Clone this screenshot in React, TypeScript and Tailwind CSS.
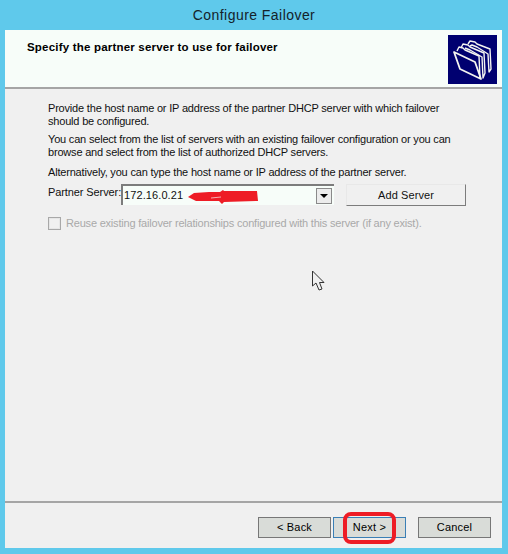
const font = { fontFamily: '"Liberation Sans", Arial, sans-serif' };

function FolderIcon() {
  return (
    <div className="h-[49px] w-[49px] bg-[#000070] bg-[radial-gradient(#000030_0.6px,transparent_0.7px)] bg-[length:2px_2px]">
      <svg width="49" height="49" viewBox="0 0 49 49" fill="none" stroke="#f4f4f0" strokeWidth="1.4" strokeLinejoin="round">
        <path d="M20 9 L22 6 L27 7 L29 9 L42 14 L43 34 L41 37 L40 19 L29 12 L24 10 L22 11" />
        <path d="M13 13 L15 9 L20 10 L22 12 L36 18 L37 38 L35 43 L34 22 L22 15 L17 13" />
        <path d="M9 16 L11 12 L15 13 L17 15 L31 21 L32 43" />
        <path d="M6 17 L27 27 L33 44 L12 34 Z" strokeWidth="1.8" />
      </svg>
    </div>
  );
}

function WizardButton({ label, focused }: { label: string; focused?: boolean }) {
  return (
    <button
      className={`flex h-[21px] w-[73px] items-center justify-center border bg-[#d9dcd8] text-[11px] tracking-[0.2px] text-black ${
        focused ? 'border-[#3b7fb5]' : 'border-[#777777]'
      }`}
    >
      {label}
    </button>
  );
}

function Cursor() {
  return (
    <svg className="absolute left-[311px] top-[270px]" width="15" height="22" viewBox="0 0 15 22">
      <path d="M1.500 1 L1.500 16 L5 13 L8 20 L11 19 L8.500 12.500 L13 12.500 Z" fill="#f0f0f0" stroke="#333333" strokeWidth="1" />
    </svg>
  );
}

function RedArrow() {
  return (
    <svg className="absolute left-[187px] top-[189px]" width="72" height="16" viewBox="0 0 72 16">
      <path d="M1 8 L7 4 L22 3 L33 3 L36 1 L37 2 L70 2 L71 12 L37 13 L35 15 L32 12 L9 12 Z" fill="#ee1c25" />
      <path d="M24 9 L34 8" stroke="#f6b0b0" strokeWidth="1" />
    </svg>
  );
}

export default function App() {
  return (
    <div style={font} className="relative flex h-[554px] w-[508px] flex-col overflow-hidden bg-[#5fc9eb] text-black">
      <div className="flex h-[30px] items-center justify-center text-[14px] tracking-[0.45px] text-[#14222a]">
        Configure Failover
      </div>
      <div className="ml-[5px] flex h-[518px] w-[497px] flex-col bg-[#f0f0f0]">
        <div className="flex h-[59px] justify-between border-b-2 border-[#a5a5a5] bg-[#f7fdf9] pr-[5px] pt-[5px]">
          <div className="pl-[22px] pt-[6px] text-[11.5px] font-bold leading-[13px] tracking-[0.2px]">
            Specify the partner server to use for failover
          </div>
          <FolderIcon />
        </div>
        <div className="flex-1 px-[43px] pt-[13px] text-[11px] leading-[13px] tracking-[-0.19px] text-[#111111]">
          <p>
            Provide the host name or IP address of the partner DHCP server with which failover should be configured.
          </p>
          <p className="mt-[5px]">
            You can select from the list of servers with an existing failover configuration or you can browse and select from the list of authorized DHCP servers.
          </p>
          <p className="mt-[7px]">Alternatively, you can type the host name or IP address of the partner server.</p>
          <div className="mt-[5px] flex items-start">
            <span className="mt-[2px] w-[73px] shrink-0 whitespace-nowrap tracking-[-0.1px]">Partner Server:</span>
            <div className="flex h-[21px] w-[213px] shrink-0 items-center justify-between border-t-2 border-l-2 border-[#7c7c7c] bg-[#f7fdf9] pl-[1px] pr-[2px] tracking-[0.1px]">
              <span>172.16.0.21</span>
              <span className="flex h-[16px] w-[16px] items-center justify-center border border-[#8a8a8a] bg-[#ececec]">
                <svg width="8" height="4" viewBox="0 0 8 4"><path d="M0 0 H8 L4 4 Z" fill="#000" /></svg>
              </span>
            </div>
            <button className="ml-[12px] flex h-[22px] w-[120px] shrink-0 items-center justify-center border border-[#e8e8e8] border-r-[#7c7c7c] border-b-[#7c7c7c] bg-[#f0f0f0] text-[11px] tracking-[0.1px]">
              Add Server
            </button>
          </div>
          <div className="mt-[11px] flex items-center whitespace-nowrap tracking-[-0.2px] text-[#a9a9a9]">
            <span className="h-[13px] w-[13px] border border-[#a8a8a8] shadow-[inset_0_0_0_1px_#e6e6e6]" />
            <span className="ml-[5px]">Reuse existing failover relationships configured with this server (if any exist).</span>
          </div>
        </div>
        <div className="flex h-[47px] items-start justify-end border-t-2 border-[#a5a5a5] pr-[11px] pt-[14px]">
          <WizardButton label="< Back" />
          <div className="ml-[2px]">
            <WizardButton label="Next >" focused />
          </div>
          <div className="ml-[12px]">
            <WizardButton label="Cancel" />
          </div>
        </div>
      </div>
      <RedArrow />
      <Cursor />
      <div className="absolute left-[343px] top-[512px] h-[32px] w-[53px] rounded-[8px] border-[4px] border-[#ee1c25]" />
    </div>
  );
}
